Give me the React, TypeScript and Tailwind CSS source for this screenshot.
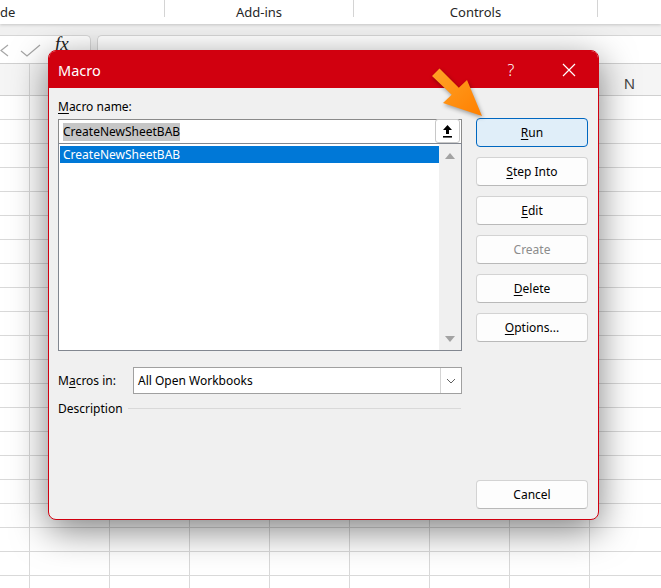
import React from "react";

const font = { fontFamily: '"Noto Sans", "Open Sans", sans-serif' };

function U({ children }: { children: React.ReactNode }) {
  return <span className="underline underline-offset-[2px] decoration-[1px]">{children}</span>;
}

function Btn({
  children,
  primary,
  disabled,
}: {
  children: React.ReactNode;
  primary?: boolean;
  disabled?: boolean;
}) {
  return (
    <div
      className={
        "h-[29px] w-full rounded-[4px] border flex items-center justify-center text-[12px] pt-[1px] " +
        (primary
          ? "bg-[#e0eef9] border-[#0067c0] text-black"
          : "bg-[#fdfdfd] border-[#d3d3d3] border-b-[#b9b9b9] " + (disabled ? "text-[#8c8c8c]" : "text-black"))
      }
    >
      {children}
    </div>
  );
}

const cols = ["G", "H", "I", "J", "K", "L", "M", "N"];

export default function App() {
  const rows = Array.from({ length: 21 });
  return (
    <div className="relative w-[661px] h-[588px] overflow-hidden bg-white" style={font}>
      {/* Ribbon */}
      <div className="relative z-10 h-[24px] bg-white flex shadow-[0_1px_3px_rgba(0,0,0,0.18)] text-[13px] text-[#262626]">
        <div className="w-[165px] shrink-0 flex items-start">
          <div className="flex-1 h-[24px] leading-[24px]">de</div>
          <div className="w-px h-[17px] bg-[#d4d4d4]" />
        </div>
        <div className="w-[189px] shrink-0 flex items-start">
          <div className="flex-1 text-center h-[24px] leading-[24px]">Add-ins</div>
          <div className="w-px h-[17px] bg-[#d4d4d4]" />
        </div>
        <div className="w-[244px] shrink-0 flex items-start">
          <div className="flex-1 text-center h-[24px] leading-[24px]">Controls</div>
          <div className="w-px h-[17px] bg-[#d4d4d4]" />
        </div>
        <div className="flex-1" />
      </div>

      {/* Formula band */}
      <div className="h-[39px] bg-[#f0f0f0] flex items-start gap-[6px]">
        <div className="mt-[11px] h-[28px] w-[91px] shrink-0 bg-white border border-l-0 border-b-0 border-[#d6d6d6] rounded-tr-[5px] flex items-center relative">
          <svg width="10" height="14" viewBox="0 0 10 14" className="absolute left-0 top-[8px]">
            <path d="M8 1 L1 6.5 L8 12" fill="none" stroke="#a6a6a6" strokeWidth="1.2" />
          </svg>
          <svg width="22" height="14" viewBox="0 0 22 14" className="absolute left-[20px] top-[8px]">
            <path d="M1 7 L7 12 L20 1" fill="none" stroke="#a6a6a6" strokeWidth="1.2" />
          </svg>
          <span
            className="absolute left-[55px] top-[-4px] text-[19px] leading-[24px] italic text-[#222]"
            style={{ fontFamily: '"Liberation Serif", serif' }}
          >
            fx
          </span>
          <svg width="10" height="6" viewBox="0 0 10 6" className="absolute left-[78px] top-[13px]">
            <path d="M1 1 L5 5 L9 1" fill="none" stroke="#8a8a8a" strokeWidth="1" />
          </svg>
        </div>
        <div className="mt-[11px] h-[28px] flex-1 bg-white border border-r-0 border-b-0 border-[#d6d6d6] rounded-tl-[5px]" />
      </div>

      {/* Column header */}
      <div className="h-[33px] bg-[#f5f5f5] border-t border-b border-[#d0d0d0] flex">
        <div className="w-[30px] shrink-0 border-r border-[#d6d6d6]" />
        {cols.map((c) => (
          <div
            key={c}
            className="w-[80px] shrink-0 border-r border-[#d6d6d6] flex items-center justify-center text-[15px] text-[#444] pt-[8px]"
          >
            {c}
          </div>
        ))}
      </div>

      {/* Grid rows */}
      {rows.map((_, i) => (
        <div key={i} className="h-[24px] border-b border-[#d9d9d9] flex">
          <div className="w-[30px] shrink-0 border-r border-[#d9d9d9]" />
          {cols.map((c) => (
            <div key={c} className="w-[80px] shrink-0 border-r border-[#d9d9d9]" />
          ))}
        </div>
      ))}

      {/* Dialog */}
      <div className="absolute left-[48px] top-[50px] w-[551px] h-[470px] rounded-[8px] border border-[#d1000f] bg-[#f0f0f0] overflow-hidden flex flex-col shadow-[0_10px_36px_rgba(0,0,0,0.5)] text-[12px] text-black">
        <div className="h-[37px] shrink-0 bg-[#d1000f] flex items-center text-white">
          <div className="pl-[9px] text-[14.5px] leading-[20px] pt-[1px]">Macro</div>
          <div className="ml-auto w-[46px] flex items-center justify-center text-[16px] font-light leading-[20px]">?</div>
          <div className="ml-[12px] mr-[6px] w-[46px] flex items-center justify-center">
            <svg width="14" height="14" viewBox="0 0 14 14">
              <path d="M1 1 L13 13 M13 1 L1 13" stroke="white" strokeWidth="1.2" />
            </svg>
          </div>
        </div>

        <div className="flex-1 flex pt-[11px] pl-[9px] pb-[10px] gap-[14px]">
          {/* Left column */}
          <div className="w-[404px] flex flex-col">
            <div className="h-[16px] leading-[16px]">
              <U>M</U>acro name:
            </div>
            <div className="mt-[4px] h-[24px] bg-white border border-b-0 border-[#8a8a8a] flex items-center pl-[4px] relative">
              <span className="bg-[#c6c6c6] h-[18px] leading-[18px]">CreateNewSheetBAB</span>
              <div className="absolute right-[1px] top-[-1px] w-[25px] h-[24px] bg-white border border-[#c8c8c8] rounded-[3px] flex items-center justify-center">
                <svg width="11" height="14" viewBox="0 0 11 14">
                  <path d="M5.5 1 L10 6 L7 6 L7 10 L4 10 L4 6 L1 6 Z" fill="black" />
                  <rect x="1" y="12" width="9" height="1.6" fill="black" />
                </svg>
              </div>
            </div>
            <div className="h-[208px] bg-white border border-[#828790] flex">
              <div className="flex-1 pt-[2px] pl-[1px]">
                <div className="h-[17px] bg-[#0078d7] text-white leading-[17px] pl-[3px]">CreateNewSheetBAB</div>
              </div>
              <div className="w-[22px] bg-[#f0f0f0] flex flex-col items-center justify-between pt-[9px] pb-[8px]">
                <svg width="10" height="6" viewBox="0 0 10 6">
                  <path d="M0 6 L5 0 L10 6 Z" fill="#a3a3a3" />
                </svg>
                <svg width="10" height="6" viewBox="0 0 10 6">
                  <path d="M0 0 L10 0 L5 6 Z" fill="#a3a3a3" />
                </svg>
              </div>
            </div>

            <div className="mt-[16px] h-[27px] flex items-center">
              <div className="w-[75px] pt-[1px]">
                M<U>a</U>cros in:
              </div>
              <div className="w-[329px] h-[27px] bg-white border border-[#a0a0a0] flex items-center">
                <div className="flex-1 pl-[4px] pt-[1px]">All Open Workbooks</div>
                <div className="w-[21px] h-full border-l border-[#d4d4d4] flex items-center justify-center">
                  <svg width="10" height="6" viewBox="0 0 10 6">
                    <path d="M1 1 L5 5 L9 1" fill="none" stroke="#606060" strokeWidth="1" />
                  </svg>
                </div>
              </div>
            </div>

            <div className="mt-[6px] h-[16px] flex items-center">
              <div className="leading-[16px] pt-[1px]">Description</div>
              <div className="flex-1 ml-[5px] h-px bg-[#d9d9d9] mr-[1px]" />
            </div>
          </div>

          {/* Right column */}
          <div className="w-[112px] flex flex-col pt-[19px] gap-[10px]">
            <Btn primary>
              <U>R</U>un
            </Btn>
            <Btn>
              <U>S</U>tep Into
            </Btn>
            <Btn>
              <U>E</U>dit
            </Btn>
            <Btn disabled>Create</Btn>
            <Btn>
              <U>D</U>elete
            </Btn>
            <Btn>
              <U>O</U>ptions...
            </Btn>
            <div className="mt-auto">
              <Btn>Cancel</Btn>
            </div>
          </div>
        </div>
      </div>

      {/* Orange arrow */}
      <svg
        width="66"
        height="62"
        viewBox="0 0 66 62"
        className="absolute left-[425px] top-[62px]"
        style={{ filter: "drop-shadow(1px 2px 2px rgba(0,0,0,0.35))" }}
      >
        <defs>
          <linearGradient id="ag" x1="0" y1="0" x2="1" y2="1">
            <stop offset="0" stopColor="#ffa326" />
            <stop offset="1" stopColor="#ff7f00" />
          </linearGradient>
        </defs>
        <polygon
          points="7,14 14.5,6.5 33.8,25.8 42,18 57,54 18,41 26.7,32.7"
          fill="url(#ag)"
        />
      </svg>
    </div>
  );
}
